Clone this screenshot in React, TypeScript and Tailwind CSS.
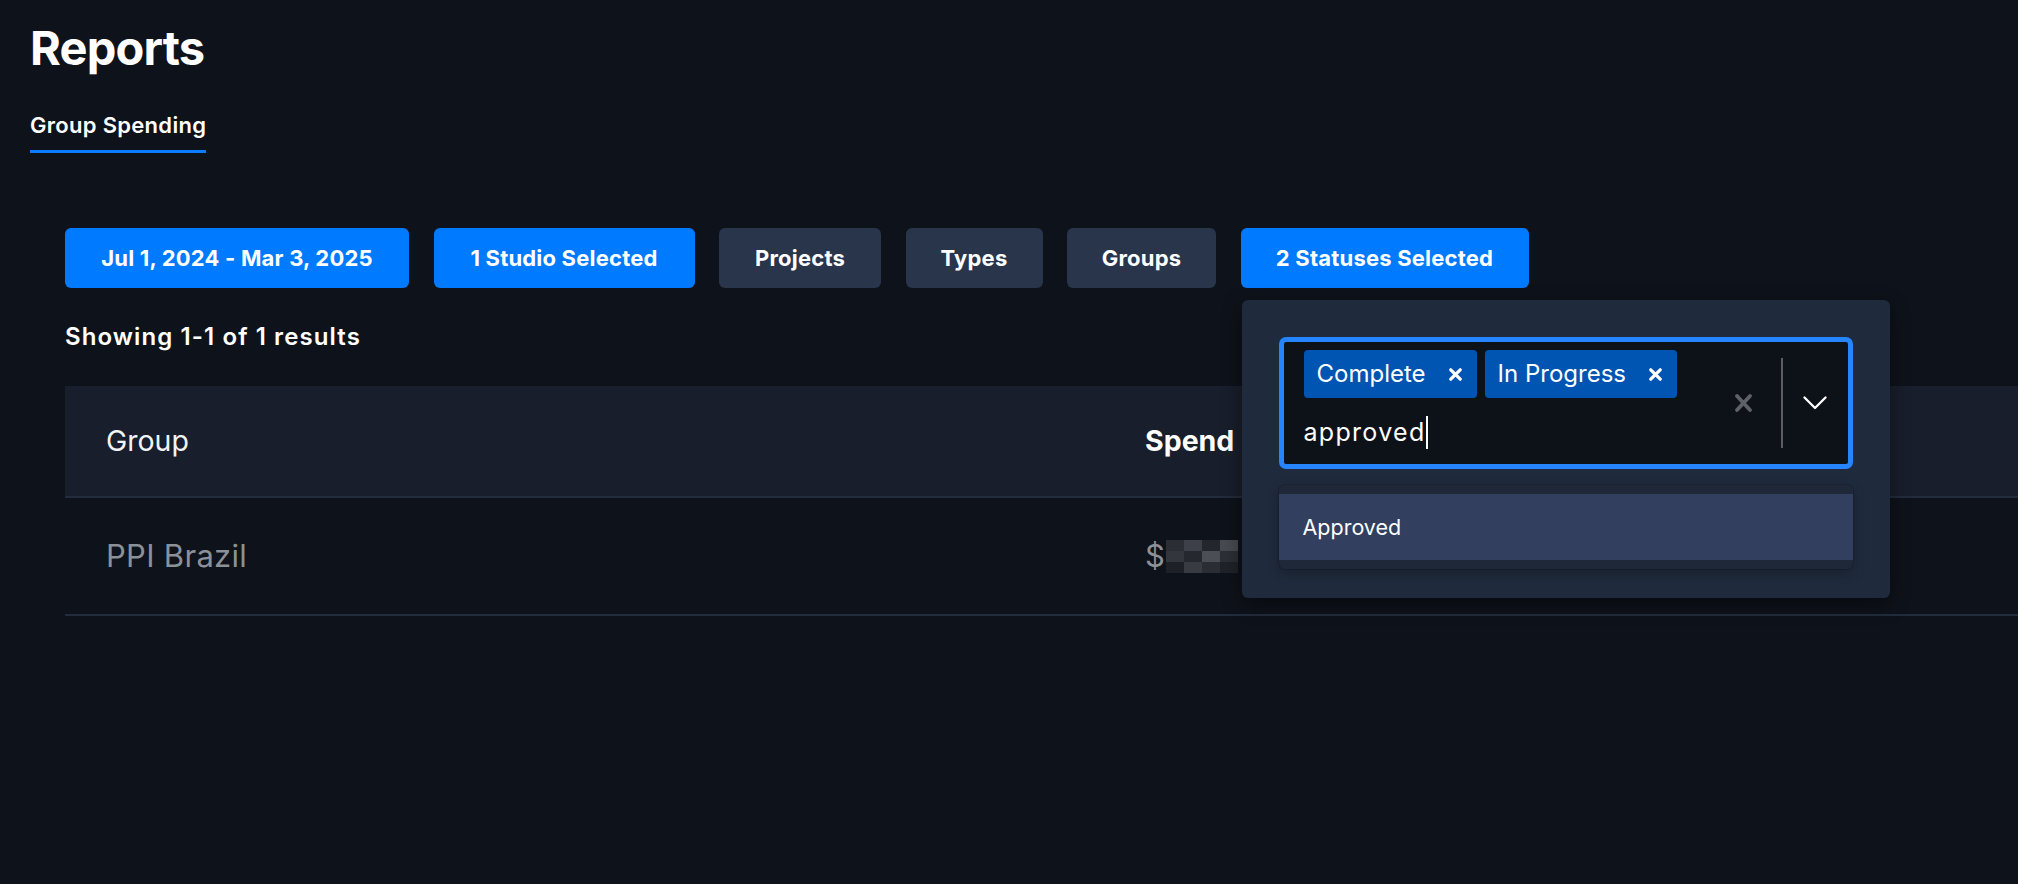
import { useState } from "react";

const filters = [
  { label: "Jul 1, 2024 - Mar 3, 2025", active: true, w: "w-[344px]" },
  { label: "1 Studio Selected", active: true, w: "w-[261px]" },
  { label: "Projects", active: false, w: "w-[162px]" },
  { label: "Types", active: false, w: "w-[137px]" },
  { label: "Groups", active: false, w: "w-[149px]" },
];

const mosaic = [
  ["#2b2e35", "#3d4048", "#23262c", "#474a51"],
  ["#33363d", "#25282e", "#4b4e55", "#2c2f36"],
  ["#1d2026", "#383b42", "#2a2d33", "#1f2228"],
];

function ChipX() {
  return (
    <svg width="13" height="13" viewBox="0 0 13 13" aria-hidden>
      <path d="M1.8 1.8 L11.2 11.2 M11.2 1.8 L1.8 11.2" stroke="white" strokeWidth="3.2" strokeLinecap="round" />
    </svg>
  );
}

function Chip({ label }: { label: string }) {
  return (
    <span className="flex h-[48px] items-center rounded-[4px] bg-[#0055b3] pl-[13px] pr-[15px] text-[24px] text-white">
      <span>{label}</span>
      <span className="ml-[23px] flex">
        <ChipX />
      </span>
    </span>
  );
}

function StatusPopover() {
  const [query] = useState("approved");
  return (
    <div className="absolute left-[1px] top-[72px] z-10 w-[648px] rounded-[6px] bg-[#1f2a3c] px-[37px] pb-[29px] pt-[37px] shadow-[0_6px_20px_rgba(0,0,0,0.45)]">
      <div className="flex h-[132px] rounded-[7px] border-[5px] border-[#2684ff] bg-[#0d1118]">
        <div className="flex flex-1 flex-col pl-[20px] pt-[8px]">
          <div className="flex gap-[8px]">
            <Chip label="Complete" />
            <Chip label="In Progress" />
          </div>
          <div className="mt-[14px] flex h-[40px] items-center">
            <span className="text-[25px] leading-[40px] tracking-[1.3px] text-white">{query}</span>
            <span className="h-[33px] w-[2px] bg-white" />
          </div>
        </div>
        <div className="flex items-center">
          <svg width="19" height="20" viewBox="0 0 19 20" className="mr-[28px]" aria-hidden>
            <path d="M3 3 L16 17 M16 3 L3 17" stroke="#5e6166" strokeWidth="3.8" strokeLinecap="round" />
          </svg>
          <span className="h-[90px] w-[2px] bg-[#5b5e63]" />
          <svg width="24" height="14" viewBox="0 0 24 14" className="ml-[20px] mr-[21px]" aria-hidden>
            <path d="M1.5 1.5 L12 12 L22.5 1.5" stroke="white" strokeWidth="2.3" fill="none" strokeLinecap="round" strokeLinejoin="round" />
          </svg>
        </div>
      </div>
      <div className="mt-[16px] rounded-[6px] bg-[#1e2838] py-[9px] shadow-[0_0_0_1px_rgba(0,0,0,0.12),0_4px_12px_rgba(0,0,0,0.25)]">
        <div className="flex h-[66px] items-center bg-[#323f5e] pl-[24px] text-[21.5px] text-white">Approved</div>
      </div>
    </div>
  );
}

export default function App() {
  return (
    <div className="min-h-[884px] w-full overflow-hidden bg-[#0e121a] font-['Inter',sans-serif] text-white">
      <div className="px-[30px] pt-[24px]">
        <h1 className="text-[47px] font-bold leading-[48px] tracking-[-0.8px]">Reports</h1>
        <div className="mt-[39px] flex">
          <div className="border-b-[3px] border-[#0a7cff] pb-[11px] text-[22px] font-semibold leading-[28px] tracking-[0.3px]">
            Group Spending
          </div>
        </div>
      </div>

      <div className="pl-[65px]">
        <div className="mt-[75px] flex gap-[24.5px]">
          {filters.map((f) => (
            <button
              key={f.label}
              className={`${f.w} h-[60px] rounded-[6px] text-[22px] font-bold tracking-[0.2px] text-white ${
                f.active ? "bg-[#007aff]" : "bg-[#28354b]"
              }`}
            >
              {f.label}
            </button>
          ))}
          <div className="relative">
            <button className="h-[60px] w-[288px] rounded-[6px] bg-[#007aff] text-[22px] font-bold tracking-[0.2px] text-white">
              2 Statuses Selected
            </button>
            <StatusPopover />
          </div>
        </div>

        <p className="mt-[35px] text-[24px] font-semibold leading-[28px] tracking-[1.1px]">Showing 1-1 of 1 results</p>

        <div className="mt-[35px]">
          <div className="flex h-[112px] items-center border-b-2 border-[#232c3c] bg-[#181e2b] text-[28.5px]">
            <div className="w-[1039px] pl-[41px] text-[#f2f3f5]">Group</div>
            <div className="pl-[41px] font-bold text-white">Spend</div>
          </div>
          <div className="flex h-[118px] items-center border-b-2 border-[#232c3c] text-[31px] tracking-[0.3px] text-[#8c9098]">
            <div className="w-[1039px] pl-[41px]">PPI Brazil</div>
            <div className="flex items-center pl-[41px]">
              <span>$</span>
              <svg width="72" height="33" viewBox="0 0 72 33" className="ml-[1px]" aria-hidden>
                {mosaic.map((row, r) =>
                  row.map((c, i) => <rect key={`${r}-${i}`} x={i * 18} y={r * 11} width="18" height="11" fill={c} />)
                )}
              </svg>
            </div>
          </div>
        </div>
      </div>
    </div>
  );
}
